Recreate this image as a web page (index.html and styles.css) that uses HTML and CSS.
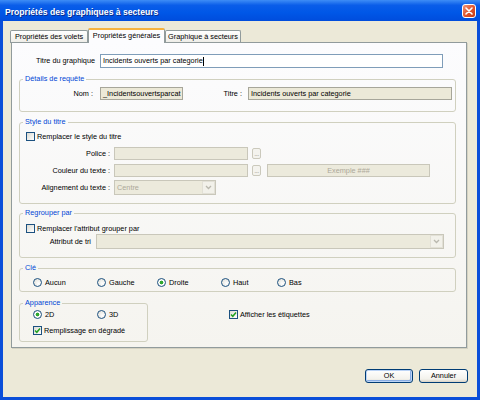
FILE: index.html
```html
<!DOCTYPE html>
<html lang="fr">
<head>
  <meta charset="UTF-8">
  <title>Propriétés des graphiques à secteurs</title>
  <link rel="stylesheet" href="styles.css">
</head>
<body>

  <div class="window">
    <div class="titlebar">
      <span class="title">Propriétés des graphiques à secteurs</span>
      <span class="close">
        <svg width="8" height="8" viewBox="0 0 8 8"><path d="M1 1L7 7M7 1L1 7" stroke="#fff" stroke-width="1.6" stroke-linecap="round"/></svg>
      </span>
    </div>

    <div class="client">
      <div class="tabs">
        <div class="tab tab-volets">Propriétés des volets</div>
        <div class="tab tab-general active">Propriétés générales</div>
        <div class="tab tab-secteurs">Graphique à secteurs</div>
      </div>

      <div class="panel">
        <div class="row title-row">
          <span class="lbl lbl-titre">Titre du graphique</span>
          <div class="field w-titre">Incidents ouverts par categorie<span class="caret"></span></div>
        </div>

        <!-- Détails de requête -->
        <fieldset class="group g-details">
          <legend>Détails de requête</legend>
          <div class="row h13">
            <span class="lbl lbl-nom">Nom :</span>
            <div class="field ro w-nom">_Incidentsouvertsparcat</div>
            <span class="lbl lbl-req">Titre :</span>
            <div class="field ro w-req">Incidents ouverts par categorie</div>
          </div>
        </fieldset>

        <!-- Style du titre -->
        <fieldset class="group g-style">
          <legend>Style du titre</legend>
          <div class="row h11 indent">
            <span class="check"></span><span class="cb-text">Remplacer le style du titre</span>
          </div>
          <div class="row h13 r-police">
            <span class="lbl lbl-style">Police :</span>
            <div class="field off w-police"></div>
            <span class="dots">...</span>
          </div>
          <div class="row h13 r-couleur">
            <span class="lbl lbl-style">Couleur du texte :</span>
            <div class="field off w-police"></div>
            <span class="dots">...</span>
            <div class="field off sample">Exemple ###</div>
          </div>
          <div class="row h15 r-align">
            <span class="lbl lbl-style">Alignement du texte :</span>
            <div class="field off combo w-align">
              <span class="combo-text">Centre</span>
              <span class="arrow"><svg width="7" height="5" viewBox="0 0 7 5"><path d="M1 1L3.5 3.5L6 1" fill="none" stroke="#B9B8AE" stroke-width="1.3"/></svg></span>
            </div>
          </div>
        </fieldset>

        <!-- Regrouper par -->
        <fieldset class="group g-group">
          <legend>Regrouper par</legend>
          <div class="row h11 indent">
            <span class="check"></span><span class="cb-text">Remplacer l'attribut grouper par</span>
          </div>
          <div class="row h15">
            <span class="lbl lbl-tri">Attribut de tri</span>
            <div class="field off combo w-tri">
              <span class="combo-text"></span>
              <span class="arrow"><svg width="7" height="5" viewBox="0 0 7 5"><path d="M1 1L3.5 3.5L6 1" fill="none" stroke="#B9B8AE" stroke-width="1.3"/></svg></span>
            </div>
          </div>
        </fieldset>

        <!-- Clé -->
        <fieldset class="group g-cle">
          <legend>Clé</legend>
          <div class="row h11 radios">
            <span class="opt o64"><span class="radio"></span>Aucun</span>
            <span class="opt o60"><span class="radio"></span>Gauche</span>
            <span class="opt o64"><span class="radio on"></span>Droite</span>
            <span class="opt o56"><span class="radio"></span>Haut</span>
            <span class="opt"><span class="radio"></span>Bas</span>
          </div>
        </fieldset>

        <div class="bottom-row">
          <fieldset class="group g-look">
            <legend>Apparence</legend>
            <div class="row h11 radios">
              <span class="opt o64"><span class="radio on"></span>2D</span>
              <span class="opt"><span class="radio"></span>3D</span>
            </div>
            <div class="row h11 radios r-fill">
              <span class="check on"><svg width="7" height="7" viewBox="0 0 7 7"><path d="M1 3.5L2.8 5.3L6 1.5" fill="none" stroke="#21A121" stroke-width="1.5"/></svg></span><span class="cb-text">Remplissage en dégradé</span>
            </div>
          </fieldset>
          <div class="row h11 labels-opt">
            <span class="check on"><svg width="7" height="7" viewBox="0 0 7 7"><path d="M1 3.5L2.8 5.3L6 1.5" fill="none" stroke="#21A121" stroke-width="1.5"/></svg></span><span class="cb-text">Afficher les étiquettes</span>
          </div>
        </div>
      </div>

      <div class="buttons">
        <button class="btn default">OK</button>
        <button class="btn">Annuler</button>
      </div>
    </div>
  </div>

</body>
</html>
```

FILE: styles.css
```css
body {
  margin: 0;
  font-family: "Liberation Sans", Arial, sans-serif;
  font-size: 7.3px;
  line-height: 10px;
  color: #000;
}

/* fenetre XP */
.window {
  width: 480px;
  height: 400px;
  box-sizing: border-box;
  display: flex;
  flex-direction: column;
  padding: 0 3px 3px;
  background: #0A4ED9;
}

.titlebar {
  height: 21px;
  margin: 0 -3px;
  padding: 2px 4px 0 5px;
  box-sizing: border-box;
  display: flex;
  align-items: center;
  background: linear-gradient(#3E8DF6, #0A5DE9 25%, #0057E7 60%, #004CDC);
  color: #fff;
  font-weight: bold;
  font-size: 8.6px;
}

.title {
  flex: 1;
  text-shadow: 1px 1px 0 #0B2C8C;
}

.close {
  width: 14px;
  height: 14px;
  margin-top: -2px;
  box-sizing: border-box;
  border: 1px solid #fff;
  border-radius: 3px;
  display: flex;
  align-items: center;
  justify-content: center;
  background: linear-gradient(135deg, #F19377, #E0532B 55%, #C53A12);
}

.client {
  flex: 1;
  background: #ECE9D8;
  padding: 7px 0 0 7px;
  display: flex;
  flex-direction: column;
}

/* onglets */
.tabs {
  display: flex;
  align-items: flex-end;
  height: 15px;
  margin-bottom: -1px;
}

.tab {
  height: 13px;
  box-sizing: border-box;
  border: 1px solid #919B9C;
  border-bottom: none;
  border-radius: 2px 2px 0 0;
  background: linear-gradient(#FFFFFF, #EDECE6);
  display: flex;
  align-items: center;
  justify-content: center;
  white-space: nowrap;
}

.tab-volets { width: 78px; }
.tab-general { width: 77px; }
.tab-secteurs { width: 76px; }

.tab.active {
  height: 15px;
  padding-bottom: 1px;
  border-top: 2px solid #F6B23E;
  background: #FCFCFE;
  position: relative;
  z-index: 1;
}

.panel {
  margin-left: 1px;
  width: 456px;
  height: 306px;
  box-sizing: border-box;
  border: 1px solid #919B9C;
  background: linear-gradient(#FCFCFE, #F5F4EF);
  padding: 0 10px 0 7px;
  box-shadow: 1px 1px 0 #D5D2C2;
}

/* lignes et champs */
.row {
  display: flex;
  align-items: center;
  white-space: nowrap;
}

.h11 { height: 11px; }
.h13 { height: 13px; }
.h15 { height: 15px; }

.lbl {
  flex: none;
  text-align: right;
}

.field {
  flex: none;
  height: 100%;
  box-sizing: border-box;
  border: 1px solid #7F9DB9;
  background: #fff;
  padding: 0 2px;
  display: flex;
  align-items: center;
  overflow: hidden;
}

.field.ro {
  background: #ECE9D8;
  border-color: #A7A69A;
}

.field.off {
  background: #ECEADC;
  border-color: #C9C7BA;
  color: #ACA899;
}

.caret {
  width: 1px;
  height: 9px;
  background: #000;
}

.title-row {
  margin-top: 11px;
  height: 14px;
}

.lbl-titre { width: 76px; margin-right: 5px; }
.w-titre { width: 343px; }

/* groupes */
.group {
  margin: 0;
  padding: 0;
  min-width: 0;
  border: 1px solid #D0D0BF;
  border-radius: 3px;
}

.group legend {
  margin-left: 3px;
  padding: 0 2px;
  color: #0046D5;
  line-height: 10px;
}

.g-details {
  margin-top: 6px;
  padding: 3px 0 11px;
}

.lbl-nom { width: 73px; margin-right: 7px; }
.w-nom { width: 83px; color: #000; }
.lbl-req { width: 59px; margin-right: 6px; }
.w-req { width: 204px; color: #000; }

.g-style {
  margin-top: 5px;
  padding: 4px 0 8px;
}

.indent { padding-left: 6px; }

.check {
  flex: none;
  width: 9px;
  height: 9px;
  box-sizing: border-box;
  border: 1px solid #1C5180;
  background: linear-gradient(135deg, #DCDBD3, #fff);
  display: flex;
  align-items: center;
  justify-content: center;
}

.cb-text { margin-left: 2px; }

.r-police { margin-top: 5px; }
.r-couleur { margin-top: 4px; }
.r-align { margin-top: 3px; }

.lbl-style { width: 90px; margin-right: 4px; }
.w-police { width: 134px; }

.dots {
  width: 9px;
  height: 11px;
  margin-left: 4px;
  box-sizing: border-box;
  border: 1px solid #CBC9BC;
  border-radius: 2px;
  background: #F4F3EE;
  color: #9E9B8E;
  font-size: 7px;
  line-height: 6px;
  letter-spacing: -0.5px;
  display: flex;
  align-items: flex-end;
  justify-content: center;
  padding-bottom: 1px;
}

.sample {
  margin-left: 6px;
  width: 163px;
  justify-content: center;
}

.combo { padding-right: 0; }
.combo-text { flex: 1; }

.arrow {
  width: 13px;
  height: 100%;
  box-sizing: border-box;
  border: 1px solid #E2E0D6;
  background: #F2F1EA;
  display: flex;
  align-items: center;
  justify-content: center;
}

.w-align { width: 102px; }

.g-group {
  margin-top: 4px;
  padding: 5px 0 8px;
}

.lbl-tri { width: 71px; margin-right: 5px; }
.w-tri { width: 348px; }

.g-cle {
  margin-top: 5px;
  padding: 4px 0 3px;
}

.radios { padding-left: 13px; }

.opt {
  flex: none;
  display: flex;
  align-items: center;
}

.o64 { width: 64px; }
.o60 { width: 60px; }
.o56 { width: 56px; }

.radio {
  width: 9px;
  height: 9px;
  margin-right: 3px;
  box-sizing: border-box;
  border: 1px solid #1C5180;
  border-radius: 50%;
  background: radial-gradient(circle at 65% 65%, #fff, #DEDDD5);
}

.radio.on {
  background: radial-gradient(circle, #2FA72F 0 1.6px, #fff 2.2px, #fff 2.6px, #DEDDD5 100%);
}

.bottom-row {
  display: flex;
  align-items: flex-start;
  margin-top: 6px;
}

.g-look {
  width: 127px;
  padding: 1px 0 5px;
}

.r-fill { margin-top: 5px; }

.labels-opt {
  margin: 11px 0 0 81px;
}

/* boutons */
.buttons {
  display: flex;
  justify-content: flex-end;
  gap: 6px;
  margin: 21px 9px 0 0;
}

.btn {
  width: 48px;
  height: 14px;
  padding: 0;
  border: 1px solid #003C74;
  border-radius: 3px;
  background: linear-gradient(#FFFFFF, #F3F2EC 75%, #D8D2C6);
  font: inherit;
  color: #000;
}

.btn + .btn { width: 49px; }

.btn.default {
  box-shadow: inset 0 0 0 1px #BCD4F6, inset -1px -1px 0 1px #89ADE4;
}
```
